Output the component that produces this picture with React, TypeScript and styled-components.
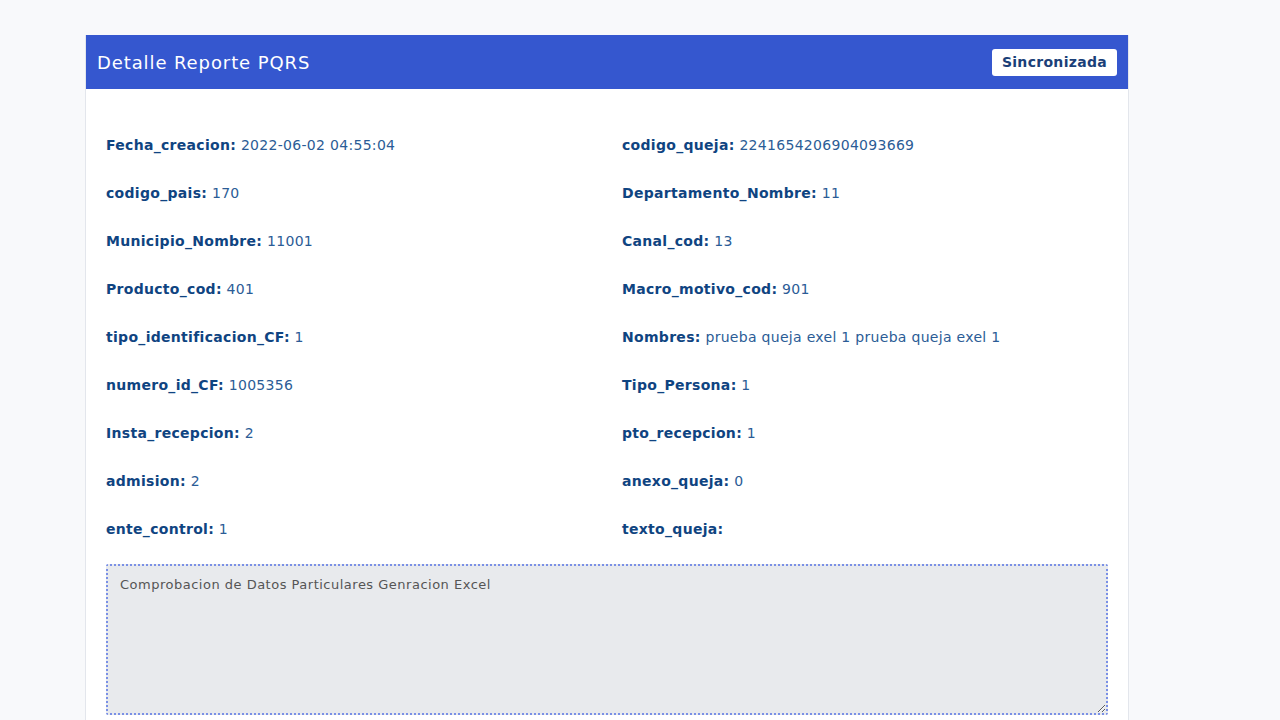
import styled, { createGlobalStyle } from "styled-components";

const GlobalStyle = createGlobalStyle`
  body {
    margin: 0;
    background: #f8f9fb;
    font-family: "DejaVu Sans", "Liberation Sans", sans-serif;
  }
`

const Page = styled.div`
  padding: 35px 151px 0 85px;
  height: 720px;
  box-sizing: border-box;
  overflow: hidden;
`

const Card = styled.div`
  background: #fff;
  border: 1px solid #e3e6ec;
  border-top: none;
`

const Header = styled.div`
  display: flex;
  align-items: center;
  justify-content: space-between;
  height: 54px;
  padding: 0 11px 0 11px;
  background-color: #3557cf;
`

const Title = styled.span`
  font-size: 18px;
  letter-spacing: 0.9px;
  color: #fff;
`

const Badge = styled.span`
  background: #fff;
  color: #1b3f78;
  font-size: 14px;
  letter-spacing: 0.3px;
  font-weight: 700;
  padding: 4px 10px;
  border-radius: 3px;
  line-height: 19px;
`

const Body = styled.div`
  padding: 46px 20px 8px 20px;
`

const Fields = styled.div`
  display: grid;
  grid-template-columns: 1fr 1fr;
  column-gap: 30px;
  row-gap: 28px;
`

const Field = styled.div`
  font-size: 14px;
  letter-spacing: 0.3px;
  line-height: 20px;
  color: #2b5c96;
  white-space: nowrap;
`

const Label = styled.span`
  font-weight: 700;
  color: #0f4481;
`

const Note = styled.textarea`
  display: block;
  width: 100%;
  height: 151px;
  margin-top: 25px;
  box-sizing: border-box;
  padding: 11px 12px;
  background: #e8eaed;
  border: 2px dotted #7a90e6;
  border-radius: 2px;
  font-family: "DejaVu Sans", "Liberation Sans", sans-serif;
  font-size: 13px;
  letter-spacing: 0.5px;
  color: #555;
  resize: vertical;
  outline: none;
`

const fields: [string, string][] = [
    ["Fecha_creacion", "2022-06-02 04:55:04"],
    ["codigo_queja", "2241654206904093669"],
    ["codigo_pais", "170"],
    ["Departamento_Nombre", "11"],
    ["Municipio_Nombre", "11001"],
    ["Canal_cod", "13"],
    ["Producto_cod", "401"],
    ["Macro_motivo_cod", "901"],
    ["tipo_identificacion_CF", "1"],
    ["Nombres", "prueba queja exel 1 prueba queja exel 1"],
    ["numero_id_CF", "1005356"],
    ["Tipo_Persona", "1"],
    ["Insta_recepcion", "2"],
    ["pto_recepcion", "1"],
    ["admision", "2"],
    ["anexo_queja", "0"],
    ["ente_control", "1"],
    ["texto_queja", ""],
]

const App = () => {
    return <>
        <GlobalStyle/>
        <Page>
            <Card>
                <Header>
                    <Title>Detalle Reporte PQRS</Title>
                    <Badge>Sincronizada</Badge>
                </Header>
                <Body>
                    <Fields>
                        {fields.map(([label, value]) =>
                            <Field key={label}>
                                <Label>{label}:</Label> {value}
                            </Field>
                        )}
                    </Fields>
                    <Note readOnly defaultValue={"Comprobacion de Datos Particulares Genracion Excel"}/>
                </Body>
            </Card>
        </Page>
    </>
}

export default App;
